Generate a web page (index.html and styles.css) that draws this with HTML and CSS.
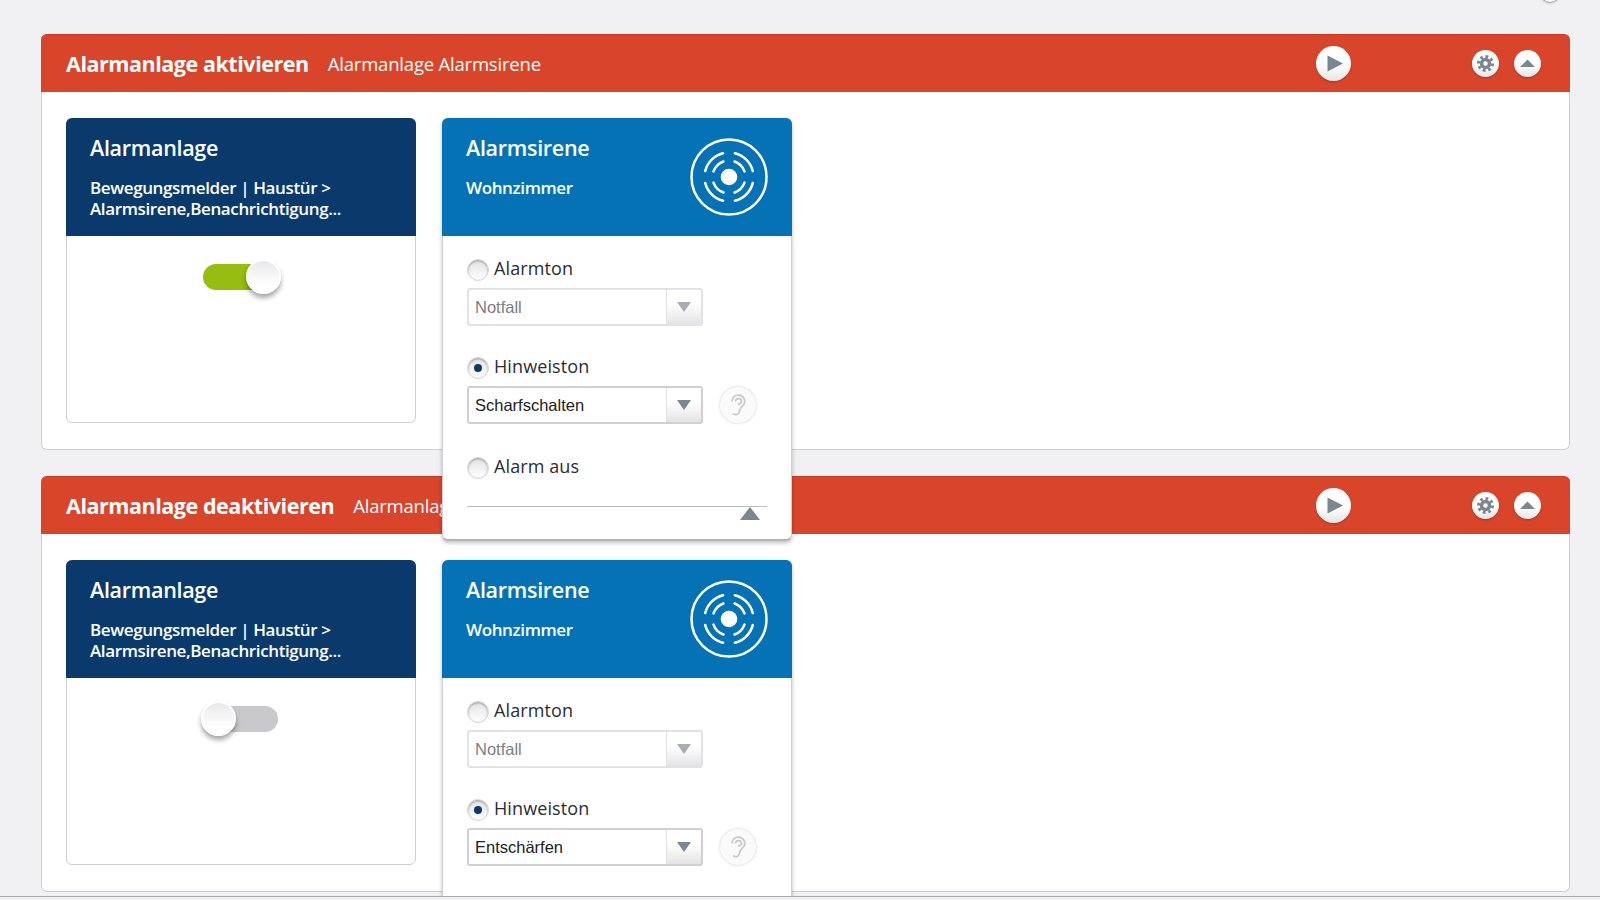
FILE: index.html
```html
<!DOCTYPE html>
<html lang="de">
<head>
  <meta charset="UTF-8" />
  <meta name="viewport" content="width=device-width, initial-scale=1.0"/>
  <title>Alarmanlage</title>
  <link rel="stylesheet" href="styles.css">
</head>
<body>
  <svg class="defs" width="0" height="0">
    <symbol id="i-play" viewBox="0 0 35 35"><path d="M11.500 9.500 L27 17.500 L11.500 25.500 Z"/></symbol>
    <symbol id="i-up" viewBox="0 0 27 27"><path d="M13.500 9.500 L21 17 L6 17 Z"/></symbol>
    <symbol id="i-gear" viewBox="0 0 27 27">
      <circle class="gear-teeth" cx="13.500" cy="13.500" r="7" pathLength="16"/>
      <circle class="gear-ring" cx="13.500" cy="13.500" r="4"/>
    </symbol>
    <symbol id="i-siren" viewBox="0 0 78 78">
      <g class="siren">
        <circle cx="39" cy="39" r="37.500"/>
        <path d="M33.100 15.200 A24.500 24.500 0 0 0 15.200 33.100"/>
        <path d="M44.900 15.200 A24.500 24.500 0 0 1 62.800 33.100"/>
        <path d="M62.800 44.900 A24.500 24.500 0 0 1 44.900 62.800"/>
        <path d="M33.100 62.800 A24.500 24.500 0 0 1 15.200 44.900"/>
        <path d="M33.400 23.500 A16.500 16.500 0 0 0 23.500 33.400"/>
        <path d="M44.600 23.500 A16.500 16.500 0 0 1 54.500 33.400"/>
        <path d="M54.500 44.600 A16.500 16.500 0 0 1 44.600 54.500"/>
        <path d="M33.400 54.500 A16.500 16.500 0 0 1 23.500 44.600"/>
      </g>
      <circle class="siren-dot" cx="39" cy="39" r="8.300"/>
    </symbol>
    <symbol id="i-ear" viewBox="0 0 24 28">
      <path class="ear" d="M5 10 C5 5 8.500 2.500 12.500 2.500 C17 2.500 20 6 20 10 C20 14 16.500 15.500 15 18 C14 20 14 21 13 23 C12 25.500 8.500 26 6.500 24"/>
      <path class="ear" d="M9 10 C9 7.500 11 6.500 12.800 6.500 C15 6.500 16.500 8.200 16 10.500 C15.700 12 13.500 12.500 12 13.500"/>
    </symbol>
  </svg>

  <main class="page">
    <section class="panel">
      <header class="panel-head">
        <h2>Alarmanlage aktivieren</h2>
        <span class="panel-sub">Alarmanlage Alarmsirene</span>
        <button class="round round-lg play"><svg><use href="#i-play"/></svg></button>
        <button class="round gear"><svg><use href="#i-gear"/></svg></button>
        <button class="round up"><svg><use href="#i-up"/></svg></button>
      </header>
      <div class="panel-body">
        <article class="card">
          <div class="card-head navy">
            <div class="card-text">
              <h3>Alarmanlage</h3>
              <p>Bewegungsmelder | Haustür &gt;<br>Alarmsirene,Benachrichtigung...</p>
            </div>
          </div>
          <div class="card-main">
            <div class="toggle on"><span class="knob"></span></div>
          </div>
        </article>
        <article class="card open">
          <div class="card-head blue">
            <div class="card-text">
              <h3>Alarmsirene</h3>
              <p>Wohnzimmer</p>
            </div>
            <svg class="siren-icon"><use href="#i-siren"/></svg>
          </div>
          <div class="options">
            <label class="radio-row"><span class="radio"></span>Alarmton</label>
            <div class="select-row">
              <div class="select disabled"><span>Notfall</span><i class="select-btn"><b></b></i></div>
            </div>
            <label class="radio-row"><span class="radio checked"></span>Hinweiston</label>
            <div class="select-row">
              <div class="select"><span>Scharfschalten</span><i class="select-btn"><b></b></i></div>
              <button class="round ear-btn"><svg><use href="#i-ear"/></svg></button>
            </div>
            <label class="radio-row last"><span class="radio"></span>Alarm aus</label>
            <div class="collapse"><span class="collapse-arrow"></span></div>
          </div>
        </article>
      </div>
    </section>

    <section class="panel">
      <header class="panel-head">
        <h2>Alarmanlage deaktivieren</h2>
        <span class="panel-sub">Alarmanlage Alarmsirene</span>
        <button class="round round-lg play"><svg><use href="#i-play"/></svg></button>
        <button class="round gear"><svg><use href="#i-gear"/></svg></button>
        <button class="round up"><svg><use href="#i-up"/></svg></button>
      </header>
      <div class="panel-body">
        <article class="card">
          <div class="card-head navy">
            <div class="card-text">
              <h3>Alarmanlage</h3>
              <p>Bewegungsmelder | Haustür &gt;<br>Alarmsirene,Benachrichtigung...</p>
            </div>
          </div>
          <div class="card-main">
            <div class="toggle"><span class="knob"></span></div>
          </div>
        </article>
        <article class="card open">
          <div class="card-head blue">
            <div class="card-text">
              <h3>Alarmsirene</h3>
              <p>Wohnzimmer</p>
            </div>
            <svg class="siren-icon"><use href="#i-siren"/></svg>
          </div>
          <div class="options">
            <label class="radio-row"><span class="radio"></span>Alarmton</label>
            <div class="select-row">
              <div class="select disabled"><span>Notfall</span><i class="select-btn"><b></b></i></div>
            </div>
            <label class="radio-row"><span class="radio checked"></span>Hinweiston</label>
            <div class="select-row">
              <div class="select"><span>Entschärfen</span><i class="select-btn"><b></b></i></div>
              <button class="round ear-btn"><svg><use href="#i-ear"/></svg></button>
            </div>
          </div>
        </article>
      </div>
    </section>
  </main>

  <span class="peek"></span>
  <footer class="bottom-bar"></footer>
</body>
</html>
```

FILE: styles.css
```css
* {
  margin: 0;
  padding: 0;
  box-sizing: border-box;
}

html, body {
  height: 100%;
  overflow: hidden;
}

body {
  background: #f1f1f4;
  font-family: "Open Sans", Arial, sans-serif;
  color: #222;
}

.defs {
  position: absolute;
}

.page {
  display: flex;
  flex-direction: column;
  gap: 26px;
  padding: 34px 30px 0 41px;
}

/* panels */
.panel {
  background: #fff;
  border: 1px solid #cfcfd2;
  border-top: none;
  border-radius: 6px;
}

.panel-head {
  display: flex;
  align-items: center;
  height: 58px;
  margin: 0 -1px;
  padding: 0 29px 0 25px;
  background: #d9452b;
  border-top: 1px solid #c93a20;
  border-radius: 6px 6px 0 0;
  color: #fff;
}

.panel-head h2 {
  font-size: 21.500px;
  font-weight: 700;
  letter-spacing: -0.45px;
}

.panel-sub {
  margin-left: 19px;
  font-size: 18.500px;
  letter-spacing: -0.2px;
  flex: 1;
}

.panel-body {
  display: flex;
  gap: 26px;
  padding: 26px 24px;
}

/* round buttons */
.round {
  flex: none;
  width: 27px;
  height: 27px;
  border: none;
  border-radius: 50%;
  background: linear-gradient(#fff 55%, #e4e4e6);
  box-shadow: 0 1px 2px rgba(0,0,0,0.25);
}

.round svg {
  display: block;
  width: 100%;
  height: 100%;
  fill: #7b868e;
}

.round-lg {
  width: 35px;
  height: 35px;
}

.play { margin-right: 121px; }
.gear { margin-right: 15px; }

.gear-teeth {
  fill: none;
  stroke: #7b868e;
  stroke-width: 3;
  stroke-dasharray: 1 1;
}

.gear-ring {
  fill: none;
  stroke: #7b868e;
  stroke-width: 3.500;
}

/* cards */
.card {
  width: 350px;
  height: 305px;
  background: #fff;
  border: 1px solid #cfcfd2;
  border-radius: 6px;
}

.card.open {
  position: relative;
  z-index: 2;
  height: 423px;
  margin-bottom: -118px;
  border-bottom: 2px solid #b4b4b4;
  box-shadow: 0 2px 4px rgba(0,0,0,0.25);
}

.card-head {
  display: flex;
  justify-content: space-between;
  height: 118px;
  margin: -1px -1px 0;
  padding: 15px 24px 0;
  border-radius: 6px 6px 0 0;
  color: #fff;
}

.navy { background: #0a3a6c; }
.blue { background: #0572b6; }

.card-head h3 {
  font-size: 21.500px;
  font-weight: 600;
  line-height: 30px;
  letter-spacing: -0.3px;
  margin-bottom: 14px;
}

.card-head p {
  font-size: 17px;
  font-weight: 600;
  line-height: 21px;
  letter-spacing: -0.38px;
  white-space: nowrap;
}

.siren-icon {
  width: 78px;
  height: 78px;
  margin-top: 5px;
}

.siren path,
.siren circle {
  fill: none;
  stroke: #fff;
  stroke-width: 2.500;
  stroke-linecap: round;
}

.siren-dot {
  fill: #fff;
}

/* toggle */
.card-main {
  display: flex;
  justify-content: center;
  padding: 28px 2px 0 0;
}

.toggle {
  position: relative;
  width: 75px;
  height: 26px;
  border-radius: 13px;
  background: #c9c9cb;
}

.toggle.on {
  background: #97bd13;
}

.knob {
  position: absolute;
  top: -5px;
  left: -2px;
  width: 35px;
  height: 35px;
  border-radius: 50%;
  background: linear-gradient(#e9e9eb, #fff 80%);
  border: 2px solid #fff;
  box-shadow: 0 4px 5px rgba(0,0,0,0.35);
}

.toggle.on .knob {
  left: 43px;
}

/* sirene options */
.options {
  padding: 22px 24px 0;
}

.radio-row {
  display: flex;
  align-items: flex-start;
  gap: 5px;
  height: 22px;
  font-size: 18px;
  line-height: 20px;
  letter-spacing: 0.1px;
  color: #2a2d33;
}

.radio {
  flex: none;
  position: relative;
  width: 22px;
  height: 22px;
  margin-top: 1px;
  border-radius: 50%;
  background: linear-gradient(#e2e2e4, #fff);
  border: 1px solid #d6d6d8;
  box-shadow: inset 0 1px 2px rgba(0,0,0,0.35);
}

.radio.checked::after {
  content: "";
  position: absolute;
  top: 6px;
  left: 6px;
  width: 8px;
  height: 8px;
  border-radius: 50%;
  background: #0a3a6c;
}

.select-row {
  display: flex;
  align-items: center;
  gap: 17px;
  margin: 8px 0 30px;
}

.select {
  display: flex;
  align-items: center;
  justify-content: space-between;
  width: 236px;
  height: 38px;
  padding-left: 6px;
  background: #fff;
  border: 2px solid #d0d0d2;
  border-radius: 3px;
  font-family: "Liberation Sans", Arial, sans-serif;
  font-size: 16.500px;
  color: #222;
}

.select.disabled {
  border-color: #e2e2e4;
  color: #7d7d80;
}

.select-btn {
  display: flex;
  align-items: center;
  justify-content: center;
  width: 35px;
  height: 100%;
  background: linear-gradient(#fff 40%, #e4e4e6);
  border-left: 1px solid #e2e2e4;
}

.select-btn b {
  border-top: 10px solid #7b868e;
  border-left: 7px solid transparent;
  border-right: 7px solid transparent;
}

.select.disabled .select-btn b {
  border-top-color: #a9adb1;
}

.ear-btn {
  width: 36px;
  height: 36px;
  background: #fafafa;
  box-shadow: 0 0 3px rgba(0,0,0,0.2);
  padding: 6px;
}

.ear {
  fill: none;
  stroke: #c8c8ca;
  stroke-width: 2;
}

.radio-row.last {
  margin-top: 32px;
}

.collapse {
  display: flex;
  justify-content: flex-end;
  margin-top: 28px;
  border-top: 1px solid #bdbdc0;
}

.collapse-arrow {
  border-bottom: 13px solid #7b868e;
  border-left: 10px solid transparent;
  border-right: 10px solid transparent;
  margin-right: 7px;
}

/* overlays at the window edges */
.peek {
  position: fixed;
  top: -18px;
  left: 1540px;
  width: 20px;
  height: 20px;
  border-radius: 50%;
  background: #fff;
  box-shadow: 0 1px 2px rgba(0,0,0,0.4);
}

.bottom-bar {
  position: fixed;
  left: 0;
  right: 0;
  bottom: 0;
  z-index: 5;
  height: 4px;
  background: #f1f1f4;
  border-top: 1px solid #a9a9ac;
}
```
